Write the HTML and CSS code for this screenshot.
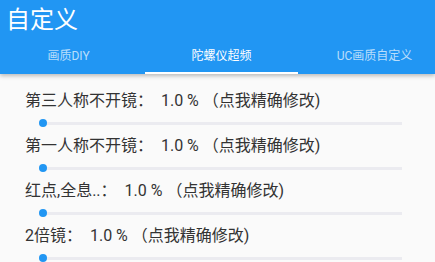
FILE: index.html
```html
<!DOCTYPE html>
<html lang="zh">
<head>
    <meta charset="UTF-8">
    <meta name="viewport" content="width=device-width, initial-scale=1.0">
    <title>自定义</title>
    <link rel="stylesheet" href="styles.css">
</head>
<body>
    <div class="appbar">
        <h1 class="title">自定义</h1>
        <div class="tabs">
            <div class="tab first">画质DIY</div>
            <div class="tab active">陀螺仪超频</div>
            <div class="tab">UC画质自定义</div>
        </div>
    </div>

    <div class="content">
        <div class="item">
            <div class="label">第三人称不开镜：  1.0 % （点我精确修改)</div>
            <div class="slider"><span class="track"></span><span class="thumb"></span></div>
        </div>
        <div class="item">
            <div class="label">第一人称不开镜：  1.0 % （点我精确修改)</div>
            <div class="slider"><span class="track"></span><span class="thumb"></span></div>
        </div>
        <div class="item">
            <div class="label">红点,全息..：  1.0 % （点我精确修改)</div>
            <div class="slider"><span class="track"></span><span class="thumb"></span></div>
        </div>
        <div class="item">
            <div class="label">2倍镜：  1.0 % （点我精确修改)</div>
            <div class="slider"><span class="track"></span><span class="thumb"></span></div>
        </div>
    </div>
</body>
</html>
```

FILE: styles.css
```css
html, body {
    margin: 0;
    padding: 0;
}
body {
    font-family: Roboto, "Noto Sans CJK SC", sans-serif;
    background-color: #fafafa;
    width: 435px;
    height: 262px;
    overflow: hidden;
}
.appbar {
    background-color: #2196f3;
    color: #fff;
    height: 74px;
    box-shadow: 0 2px 4px rgba(0, 0, 0, 0.25);
    position: relative;
    z-index: 1;
}
.title {
    margin: 0;
    padding-left: 6px;
    height: 36px;
    line-height: 40px;
    font-size: 24px;
    font-weight: normal;
}
.tabs {
    display: grid;
    grid-template-columns: 145px 153px 153px;
    height: 38px;
}
.tab {
    font-size: 12px;
    text-align: center;
    line-height: 40px;
    height: 36px;
    color: rgba(255, 255, 255, 0.7);
    border-bottom: 2px solid transparent;
}
.tab.first {
    padding-right: 8px;
}
.tab.active {
    color: #fff;
    border-bottom-color: #fff;
}
.content {
    padding-top: 16px;
}
.item {
    height: 45px;
}
.label {
    padding-left: 25px;
    font-size: 16px;
    line-height: 22px;
    height: 22px;
    color: #333;
    white-space: pre;
}
.slider {
    position: relative;
    height: 23px;
    margin: 0 33px 0 41px;
}
.track {
    position: absolute;
    left: 0;
    right: 0;
    top: 10px;
    height: 3px;
    background-color: #ebebf0;
}
.thumb {
    position: absolute;
    left: -2px;
    top: 7px;
    width: 8px;
    height: 8px;
    border-radius: 50%;
    background-color: #2196f3;
}
```
